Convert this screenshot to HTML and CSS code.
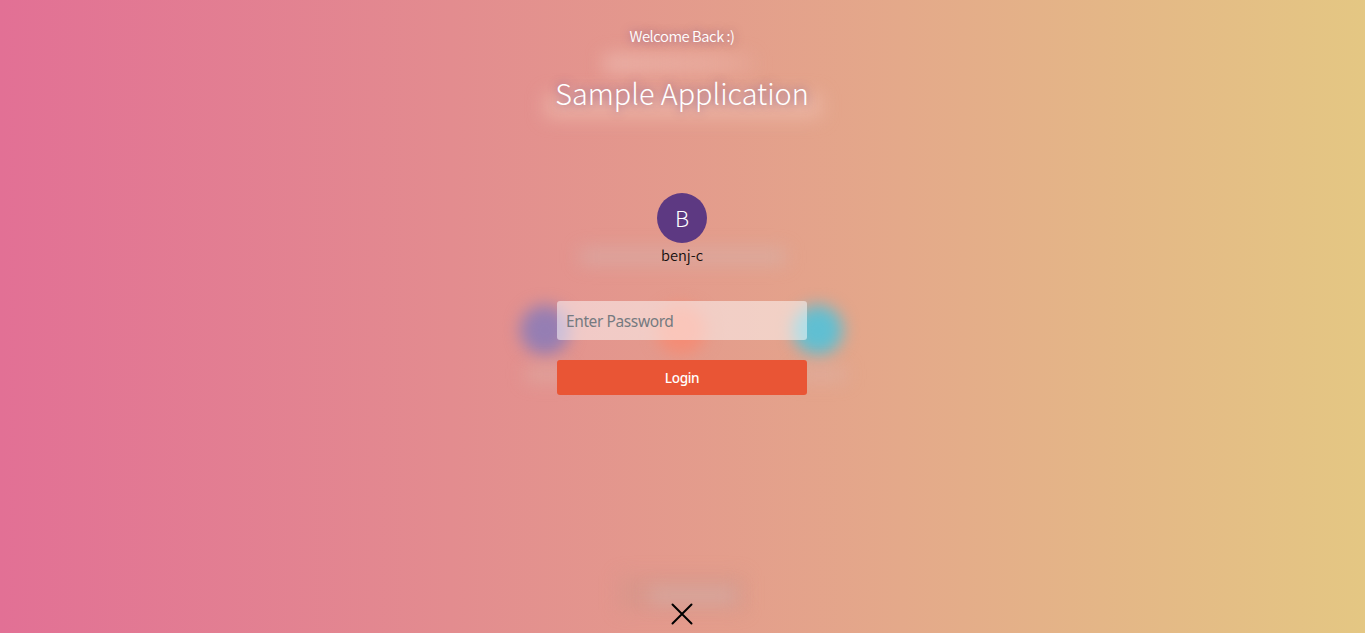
FILE: index.html
```html
<!DOCTYPE html>
<html lang="en">
<head>
<meta charset="utf-8">
<title>Sample Application</title>
<link rel="stylesheet" href="styles.css">
</head>
<body>
<div class="backdrop" aria-hidden="true">
  <i class="glow glow-welcome"></i>
  <i class="glow glow-title"></i>
  <i class="glow glow-prompt"></i>
  <i class="orb orb-purple"></i>
  <i class="orb orb-red"></i>
  <i class="orb orb-cyan"></i>
  <i class="glow glow-name glow-left"></i>
  <i class="glow glow-name glow-right"></i>
  <i class="glow glow-footer-box"></i>
  <i class="glow glow-footer"></i>
</div>
<main class="login">
  <p class="welcome">Welcome Back :)</p>
  <h1 class="title">Sample Application</h1>
  <div class="avatar">B</div>
  <div class="username">benj-c</div>
  <form class="form">
    <input class="password" type="password" placeholder="Enter Password">
    <button class="submit" type="button">Login</button>
  </form>
  <button class="close" type="button" aria-label="Close">
    <svg width="22" height="22" viewBox="0 0 22 22"><path d="M1.5 1.5 20.5 20.5M20.5 1.5 1.5 20.5" fill="none" stroke="#000" stroke-width="2" stroke-linecap="round"/></svg>
  </button>
</main>
</body>
</html>
```
FILE: styles.css
```css
* { box-sizing: border-box; }
body {
  margin: 0;
  height: 633px;
  overflow: hidden;
  position: relative;
  font-family: "Noto Sans", sans-serif;
  background: linear-gradient(90deg, #e27095, #e38c8f 33%, #e4a98a 66%, #e4c783);
}
.login {
  position: relative;
  width: 250px;
  height: 633px;
  margin-left: 557px;
  display: flex;
  flex-direction: column;
  align-items: center;
}
.welcome {
  margin: 24px 0 0;
  height: 24px;
  font: 350 14.8px/24px "Noto Sans CJK JP", sans-serif;
  letter-spacing: -0.45px;
  color: #fff;
  white-space: nowrap;
  text-shadow: 0 0 10px rgba(93, 57, 130, .6);
}
.title {
  margin: 21px 0 0;
  height: 48px;
  font: 300 28.8px/48px "Noto Sans CJK JP", sans-serif;
  color: #fff;
  white-space: nowrap;
  text-shadow: 0 0 10px rgba(93, 57, 130, .7);
}
.avatar {
  margin-top: 76px;
  flex: none;
  width: 50px;
  height: 50px;
  border-radius: 50%;
  background: #5d3982;
  color: #fff;
  text-align: center;
  font: 300 22px/48px "Noto Sans CJK JP", sans-serif;
}
.username {
  height: 24px;
  font: 350 14.6px/24px "Noto Sans CJK JP", sans-serif;
  color: #16100f;
}
.form {
  margin-top: 34px;
  width: 250px;
  display: flex;
  flex-direction: column;
  gap: 20px;
}
.password {
  width: 100%;
  height: 39px;
  padding: 1px 9px 0;
  border: 0;
  border-radius: 3px;
  background: rgba(255, 255, 255, .5);
  font: 15.5px "Noto Sans", sans-serif;
  letter-spacing: -0.4px;
}
.password::placeholder { color: #757a80; opacity: 1; }
.submit {
  height: 35px;
  padding: 0 0 1px;
  border: 0;
  border-radius: 3px;
  background: #e95535;
  color: #fff;
  font: 500 13.6px "Noto Sans", sans-serif;
  letter-spacing: -0.35px;
}
.close {
  margin: auto 0 8.5px;
  padding: 0;
  border: 0;
  background: none;
  line-height: 0;
}
/* Defocused account picker behind the login panel */
.backdrop { position: absolute; inset: 0; overflow: hidden; }
.glow, .orb { position: absolute; }
.glow { filter: blur(9px); }
.glow-welcome { left: 604px; top: 55px; width: 150px; height: 17px; background: linear-gradient(90deg, rgba(240, 195, 185, .65), rgba(240, 190, 180, .5) 70%, rgba(240, 188, 178, .2)); }
.glow-title { left: 545px; top: 94px; width: 276px; height: 24px; background: rgba(240, 192, 176, .6); }
.glow-prompt { left: 580px; top: 249px; width: 206px; height: 15px; background: rgba(210, 182, 178, .52); }
.orb { top: 305px; width: 50px; height: 50px; border-radius: 50%; filter: blur(8px); }
.orb-purple { left: 520px; background: #957eb3; }
.orb-red { left: 656px; background: #f48c75; }
.orb-cyan { left: 793px; background: #60bfd2; }
.glow-name { top: 367px; height: 14px; background: rgba(218, 178, 170, .55); }
.glow-left { left: 526px; width: 42px; }
.glow-right { left: 796px; width: 50px; }
.glow-footer-box { left: 619px; top: 576px; width: 125px; height: 34px; background: rgba(210, 150, 138, .5); }
.glow-footer { left: 650px; top: 589px; width: 86px; height: 13px; background: rgba(214, 176, 170, .75); }
```
